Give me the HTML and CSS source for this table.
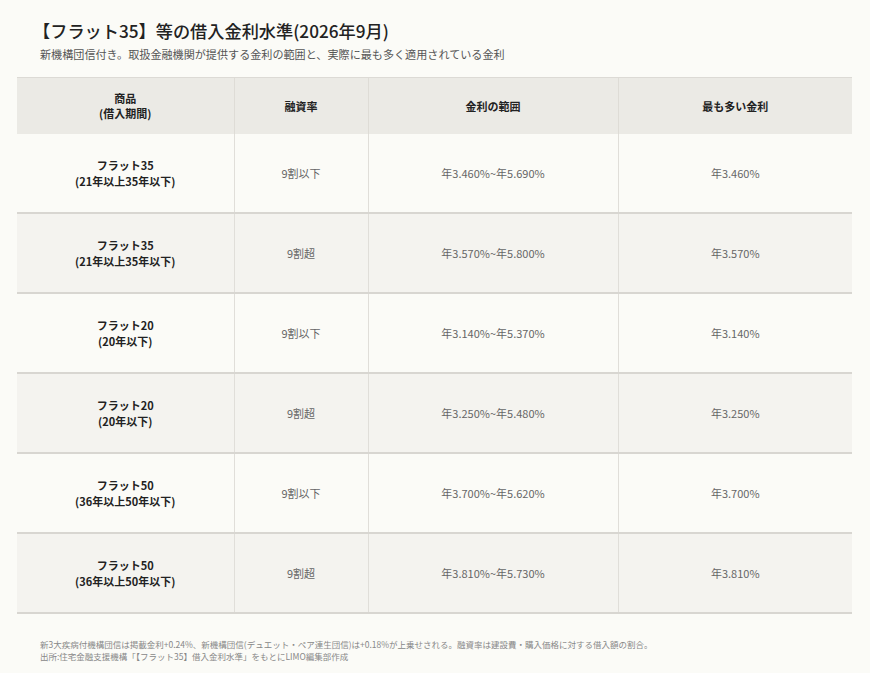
FILE: index.html
```html
<!DOCTYPE html>
<html lang="ja">
<head>
<meta charset="utf-8">
<link rel="stylesheet" href="styles.css">
</head>
<body>
<div class="page">
  <h1 class="title">【フラット35】等の借入金利水準(2026年9月)</h1>
  <p class="subtitle">新機構団信付き。取扱金融機関が提供する金利の範囲と、実際に最も多く適用されている金利</p>
  <table class="rates">
    <colgroup>
      <col class="c1"><col class="c2"><col class="c3"><col class="c4">
    </colgroup>
    <thead>
      <tr><th>商品<br>(借入期間)</th><th>融資率</th><th>金利の範囲</th><th>最も多い金利</th></tr>
    </thead>
    <tbody>
      <tr><td class="name">フラット35<br>(21年以上35年以下)</td><td>9割以下</td><td>年3.460%~年5.690%</td><td>年3.460%</td></tr>
      <tr><td class="name">フラット35<br>(21年以上35年以下)</td><td>9割超</td><td>年3.570%~年5.800%</td><td>年3.570%</td></tr>
      <tr><td class="name">フラット20<br>(20年以下)</td><td>9割以下</td><td>年3.140%~年5.370%</td><td>年3.140%</td></tr>
      <tr><td class="name">フラット20<br>(20年以下)</td><td>9割超</td><td>年3.250%~年5.480%</td><td>年3.250%</td></tr>
      <tr><td class="name">フラット50<br>(36年以上50年以下)</td><td>9割以下</td><td>年3.700%~年5.620%</td><td>年3.700%</td></tr>
      <tr><td class="name">フラット50<br>(36年以上50年以下)</td><td>9割超</td><td>年3.810%~年5.730%</td><td>年3.810%</td></tr>
    </tbody>
  </table>
  <div class="notes">
    <p>新3大疾病付機構団信は掲載金利+0.24%、新機構団信(デュエット・ペア連生団信)は+0.18%が上乗せされる。融資率は建設費・購入価格に対する借入額の割合。</p>
    <p>出所:住宅金融支援機構「【フラット35】借入金利水準」をもとにLIMO編集部作成</p>
  </div>
</div>
</body>
</html>
```

FILE: styles.css
```css
html, body {
  margin: 0;
  padding: 0;
  background: #fbfbf7;
}
body {
  font-family: "Noto Sans CJK JP", "Noto Sans", sans-serif;
  color: #222;
}
.page {
  padding: 18px 18px 0 17px;
}
.title {
  margin: 0 0 2px 16px;
  font-size: 17.2px;
  line-height: 26px;
  font-weight: 500;
  color: #222;
}
.subtitle {
  margin: 0 0 15px 23px;
  font-size: 11.1px;
  line-height: 16px;
  color: #555;
}
.rates {
  width: 835px;
  border-collapse: collapse;
  table-layout: fixed;
}
.c1 { width: 217px; }
.c2 { width: 134px; }
.c3 { width: 250px; }
.c4 { width: 234px; }
.rates th {
  height: 56px;
  background: #ebeae5;
  border-top: 1px solid #dcdad5;
  border-left: 1px solid #dedcd6;
  font-size: 11px;
  line-height: 15px;
  font-weight: 700;
  color: #222;
  text-align: center;
  vertical-align: middle;
  padding: 0;
}
.rates td {
  height: 78px;
  border-bottom: 2px solid #d8d6d1;
  border-left: 1px solid #e0ded9;
  font-size: 11px;
  line-height: 16px;
  color: #666;
  text-align: center;
  vertical-align: middle;
  padding: 0;
}
.rates th:first-child,
.rates td:first-child {
  border-left: none;
}
.rates tbody tr:nth-child(odd) td {
  background: #fbfbf7;
}
.rates tbody tr:nth-child(even) td {
  background: #f4f3ef;
}
.rates td.name {
  font-weight: 700;
  color: #222;
}
.notes {
  margin: 24px 0 0 23px;
  font-size: 8.5px;
  line-height: 12px;
  color: #888;
}
.notes p {
  margin: 0;
}
```
